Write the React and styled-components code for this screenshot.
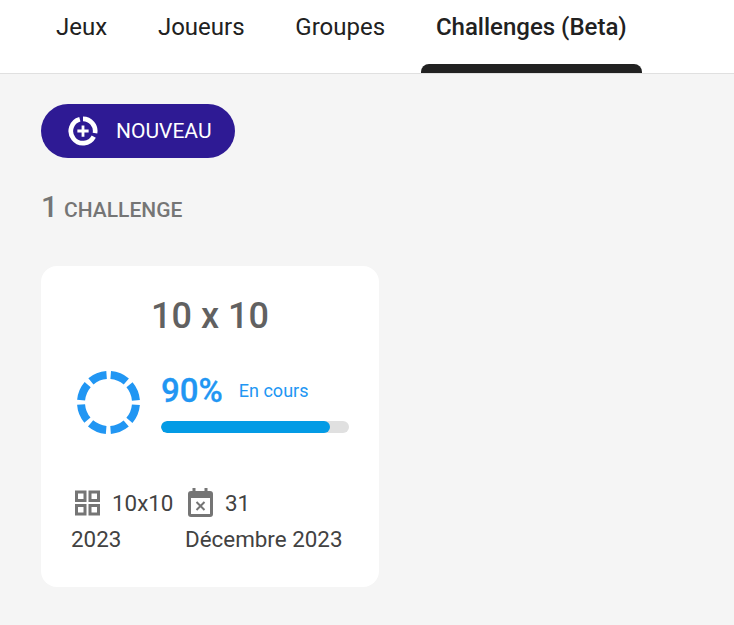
import styled, { createGlobalStyle } from "styled-components";

const GlobalStyle = createGlobalStyle`
  html, body {
    margin: 0;
    padding: 0;
    background: #f5f5f5;
    font-family: Roboto, "Liberation Sans", sans-serif;
  }
  * {
    box-sizing: border-box;
  }
`;

const Page = styled.div`
  width: 734px;
  height: 625px;
  overflow: hidden;
`;

const TabBar = styled.nav`
  display: flex;
  gap: 20.8px;
  height: 74px;
  padding-left: 41px;
  background: #fff;
  border-bottom: 1px solid #e0e0e0;
`;

const Tab = styled.div`
  position: relative;
  height: 73px;
  padding: 13px 15px 0;
  font-size: 24px;
  line-height: 28px;
  font-weight: ${(p) => (p.$active ? 500 : 400)};
  color: #212121;

  ${(p) =>
    p.$active &&
    `
    &::after {
      content: "";
      position: absolute;
      left: 0;
      right: 0;
      bottom: 0;
      height: 9px;
      background: #212121;
      border-radius: 8px 8px 0 0;
    }
  `}
`;

const Content = styled.main`
  padding: 30px 41px 0;
`;

const NewButton = styled.button`
  display: flex;
  align-items: center;
  gap: 18px;
  width: 194px;
  height: 54px;
  padding: 0 0 0 27px;
  border: 0;
  border-radius: 27px;
  background: #2e1a94;
  color: #fff;
  font-family: inherit;
  font-size: 21px;
  font-weight: 400;
`;

const Count = styled.h2`
  display: flex;
  align-items: baseline;
  gap: 6px;
  margin: 31px 0 0;
  height: 36px;
  line-height: 36px;
  color: #757575;
  font-size: 21px;
  font-weight: 500;
  text-transform: uppercase;
`;

const CountNumber = styled.span`
  font-size: 30px;
`;

const Card = styled.article`
  width: 338px;
  height: 321px;
  margin-top: 41px;
  padding: 28px 30px 0;
  background: #fff;
  border-radius: 16px;
`;

const CardTitle = styled.h3`
  margin: 0;
  text-align: center;
  font-size: 36px;
  line-height: 44px;
  font-weight: 500;
  color: #616161;
`;

const ProgressRow = styled.div`
  display: flex;
  align-items: flex-start;
  gap: 21px;
  height: 64px;
  margin-top: 33px;
  padding-left: 6px;
`;

const ProgressInfo = styled.div`
  flex: 1;
  margin-top: 1px;
`;

const ProgressLabels = styled.div`
  display: flex;
  align-items: center;
  gap: 16px;
  height: 36px;
  color: #2196f3;
`;

const Percent = styled.span`
  font-size: 33px;
  font-weight: 500;
  -webkit-text-stroke: 0.3px #2196f3;
`;

const Status = styled.span`
  font-size: 18px;
`;

const Track = styled.div`
  height: 12px;
  margin-top: 13px;
  border-radius: 6px;
  background: #e0e0e0;
  overflow: hidden;
`;

const Fill = styled.div`
  height: 100%;
  border-radius: 6px;
  background: #039be5;
`;

const Meta = styled.div`
  display: flex;
  margin-top: 50px;
`;

const MetaItem = styled.div`
  width: ${(p) => p.$width}px;
  flex: none;
  font-size: 22.4px;
  line-height: 36px;
  color: #424242;

  svg {
    display: inline-block;
    vertical-align: -7px;
    margin-right: 10px;
  }
`;

const Ring = () => {
  const r = 27.5;
  const c = 2 * Math.PI * r;
  const gap = 4.5;
  const dash = c / 8 - gap;
  return (
    <svg width="63" height="63" viewBox="0 0 63 63" style={{ flex: "none" }}>
      <circle
        cx="31.5"
        cy="31.5"
        r={r}
        fill="none"
        stroke="#2196f3"
        strokeWidth="8"
        strokeDasharray={`${dash} ${gap}`}
        strokeDashoffset={-gap / 2}
        transform="rotate(-90 31.5 31.5)"
      />
    </svg>
  );
};

const PlusCircleIcon = () => (
  <svg width="30" height="30" viewBox="0 0 32 32" fill="none" stroke="#fff">
    <path d="M16 3A13 13 0 0 1 28.8 18.26" strokeWidth="5" />
    <path d="M27.48 22.1A13 13 0 1 1 12.64 3.44" strokeWidth="5" />
    <path d="M16 10v12M10 16h12" strokeWidth="3" />
  </svg>
);

const GridIcon = () => (
  <svg width="31" height="30" viewBox="0 0 31 30" fill="none" stroke="#757575" strokeWidth="3">
    <rect x="5.5" y="4" width="8.5" height="8.5" />
    <rect x="19" y="4" width="8.5" height="8.5" />
    <rect x="5.5" y="17.5" width="8.5" height="8.5" />
    <rect x="19" y="17.5" width="8.5" height="8.5" />
  </svg>
);

const CalendarIcon = () => (
  <svg width="30" height="30" viewBox="0 0 30 30" fill="none">
    <path d="M9 0v6M21 0v6" stroke="#757575" strokeWidth="3" />
    <rect x="3" y="3" width="25" height="26" rx="3" fill="#757575" />
    <rect x="6" y="10" width="19" height="16" fill="#fff" />
    <path d="M11.5 14l8 8M19.5 14l-8 8" stroke="#757575" strokeWidth="2" />
  </svg>
);

export default function App() {
  return (
    <Page>
      <GlobalStyle />
      <TabBar>
        <Tab>Jeux</Tab>
        <Tab>Joueurs</Tab>
        <Tab>Groupes</Tab>
        <Tab $active>Challenges (Beta)</Tab>
      </TabBar>
      <Content>
        <NewButton>
          <PlusCircleIcon />
          NOUVEAU
        </NewButton>
        <Count>
          <CountNumber>1</CountNumber> Challenge
        </Count>
        <Card>
          <CardTitle>10 x 10</CardTitle>
          <ProgressRow>
            <Ring />
            <ProgressInfo>
              <ProgressLabels>
                <Percent>90%</Percent>
                <Status>En cours</Status>
              </ProgressLabels>
              <Track>
                <Fill style={{ width: "90%" }} />
              </Track>
            </ProgressInfo>
          </ProgressRow>
          <Meta>
            <MetaItem $width={114}>
              <GridIcon />
              10x10 2023
            </MetaItem>
            <MetaItem $width={162}>
              <CalendarIcon />
              31 Décembre 2023
            </MetaItem>
          </Meta>
        </Card>
      </Content>
    </Page>
  );
}
